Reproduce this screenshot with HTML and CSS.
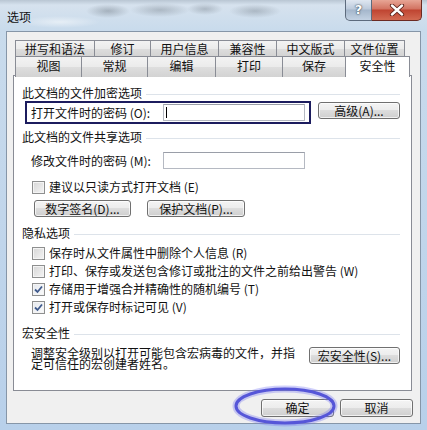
FILE: index.html
```html
<!DOCTYPE html>
<html lang="zh-CN">

<head>
    <meta charset="UTF-8">
    <title>选项</title>
    <link rel="stylesheet" href="styles.css">
</head>

<body>
    <div class="window">
        <div class="titlebar">
            <span class="title">选项</span>
            <div class="caption-btns">
                <span class="cap-help">?</span>
                <span class="cap-close">
                    <svg width="16" height="12" viewBox="0 0 16 12">
                        <path d="M3 1.5 L13 10.5 M13 1.5 L3 10.5" stroke="#5a2018" stroke-width="4.2" stroke-linecap="round"/>
                        <path d="M3 1.5 L13 10.5 M13 1.5 L3 10.5" stroke="#fff" stroke-width="2.4" stroke-linecap="round"/>
                    </svg>
                </span>
            </div>
        </div>

        <div class="client">
            <div class="tabs">
                <div class="tab-row row-back">
                    <div class="tab">拼写和语法</div>
                    <div class="tab">修订</div>
                    <div class="tab">用户信息</div>
                    <div class="tab">兼容性</div>
                    <div class="tab">中文版式</div>
                    <div class="tab">文件位置</div>
                </div>
                <div class="tab-row row-front">
                    <div class="tab">视图</div>
                    <div class="tab">常规</div>
                    <div class="tab">编辑</div>
                    <div class="tab">打印</div>
                    <div class="tab">保存</div>
                    <div class="tab selected">安全性</div>
                </div>
            </div>

            <div class="panel">
                <div class="group-title">此文档的文件加密选项</div>
                <div class="pw-row">
                    <div class="focus-box">
                        <span class="field-label">打开文件时的密码 (O):</span>
                        <span class="input"><span class="caret"></span></span>
                    </div>
                    <button class="btn adv">高级(A)...</button>
                </div>

                <div class="group-title gap-6">此文档的文件共享选项</div>
                <div class="field-row">
                    <span class="field-label">修改文件时的密码 (M):</span>
                    <span class="input"></span>
                </div>
                <div class="check-row readonly">
                    <span class="check"></span>建议以只读方式打开文档 (E)
                </div>
                <div class="btn-row">
                    <button class="btn sign">数字签名(D)...</button>
                    <button class="btn protect">保护文档(P)...</button>
                </div>

                <div class="group-title gap-9">隐私选项</div>
                <div class="check-list">
                    <div class="check-row"><span class="check"></span>保存时从文件属性中删除个人信息 (R)</div>
                    <div class="check-row"><span class="check"></span>打印、保存或发送包含修订或批注的文件之前给出警告 (W)</div>
                    <div class="check-row"><span class="check on"><svg width="11" height="11" viewBox="0 0 11 11"><path d="M2 5.5 L4.5 8 L9 2.5" fill="none" stroke="#3f5a8c" stroke-width="1.8"/></svg></span>存储用于增强合并精确性的随机编号 (T)</div>
                    <div class="check-row"><span class="check on"><svg width="11" height="11" viewBox="0 0 11 11"><path d="M2 5.5 L4.5 8 L9 2.5" fill="none" stroke="#3f5a8c" stroke-width="1.8"/></svg></span>打开或保存时标记可见 (V)</div>
                </div>

                <div class="group-title gap-12">宏安全性</div>
                <div class="macro-row">
                    <p class="macro-text">调整安全级别以打开可能包含宏病毒的文件，并指定可信任的宏创建者姓名。</p>
                    <button class="btn macro">宏安全性(S)...</button>
                </div>
            </div>

            <div class="footer">
                <button class="btn ok">确定</button>
                <button class="btn">取消</button>
            </div>
        </div>

        <!-- hand drawn mark round the OK button -->
        <svg class="mark" width="112" height="48" viewBox="0 0 112 48">
            <ellipse cx="55" cy="23" rx="49" ry="17" fill="none" stroke="rgba(120,120,240,0.35)" stroke-width="7"/>
            <ellipse cx="55" cy="23" rx="49" ry="17" fill="none" stroke="#5656d8" stroke-width="3"/>
        </svg>
    </div>
</body>

</html>
```

FILE: styles.css
```css
body {
    margin: 0;
    overflow: hidden;
    font-family: "Noto Sans CJK SC", "Noto Sans", sans-serif;
    font-size: 12px;
    color: #111;
}

.window {
    position: relative;
    width: 427px;
    height: 430px;
    background:
        radial-gradient(ellipse 22px 7px at 108px 11px, rgba(80, 90, 100, 0.35), transparent),
        radial-gradient(ellipse 30px 7px at 160px 10px, rgba(80, 90, 100, 0.3), transparent),
        radial-gradient(ellipse 18px 6px at 205px 9px, rgba(80, 90, 100, 0.3), transparent),
        radial-gradient(ellipse 26px 7px at 255px 11px, rgba(80, 90, 100, 0.3), transparent),
        radial-gradient(ellipse 40px 6px at 60px 22px, rgba(255, 255, 255, 0.5), transparent),
        linear-gradient(#b9c6d3 0px, #d6e2ee 5px, #c9dbec 30px, #b8d0ea 100%);
}

.titlebar {
    height: 31px;
    display: flex;
    justify-content: space-between;
    align-items: flex-start;
}

.title {
    padding: 10px 0 0 7px;
    line-height: 14px;
}

.caption-btns {
    display: flex;
    margin-right: 5px;
}

.cap-help {
    width: 27px;
    height: 21px;
    box-sizing: border-box;
    border: 1px solid #5d6b7d;
    border-top: none;
    border-radius: 0 0 0 5px;
    background: linear-gradient(#dfe7f1, #bccadb 45%, #a4b6cb 50%, #c3d2e3);
    color: #fff;
    font-family: "DejaVu Sans", sans-serif;
    font-weight: bold;
    font-size: 13px;
    line-height: 20px;
    text-align: center;
    text-shadow: 0 0 2px #33404f, 0 0 1px #33404f;
}

.cap-close {
    width: 50px;
    height: 21px;
    box-sizing: border-box;
    border: 1px solid #6b2a22;
    border-top: none;
    border-left: none;
    border-radius: 0 0 5px 0;
    background: linear-gradient(#e7a595, #d27361 45%, #bf4431 50%, #d26a52);
    display: flex;
    align-items: center;
    justify-content: center;
}

.client {
    position: relative;
    margin-left: 6px;
    width: 415px;
    height: 393px;
    box-sizing: border-box;
    border: 1px solid #8696a8;
    background: #f0f0f0;
}

.tabs {
    padding: 8px 0 0 8px;
}

.tab-row {
    display: grid;
}

.row-back {
    grid-template-columns: 79px 56px 68px 58px 68px 61px;
    height: 16px;
}

.row-front {
    grid-template-columns: 66px 66px 68px 67px 63px 65px;
    height: 19px;
}

.tab {
    border-top: 1px solid #898c95;
    border-left: 1px solid #898c95;
    background: linear-gradient(#f3f3f3, #ebebeb 50%, #dedede 50%, #d3d3d3);
    text-align: center;
    line-height: 15px;
}

.row-front .tab {
    line-height: 18px;
}

.tab:last-child {
    border-right: 1px solid #898c95;
}

.tab.selected {
    position: relative;
    z-index: 1;
    height: 20px;
    background: #fff;
}

.panel {
    margin-left: 6px;
    width: 399px;
    height: 316px;
    box-sizing: border-box;
    border: 1px solid #898c95;
    background: #fff;
    padding: 10px 11px 0 8px;
}

.group-title {
    display: flex;
    align-items: center;
    line-height: 14px;
}

.group-title::after {
    content: "";
    flex: 1;
    height: 1px;
    margin: 2px 0 0 4px;
    background: #dde3ea;
}

.gap-6 {
    margin-top: 6px;
}

.gap-9 {
    margin-top: 9px;
}

.gap-12 {
    margin-top: 12px;
}

.pw-row {
    display: flex;
    align-items: flex-start;
    margin: 1px 0 0 3px;
}

.focus-box {
    width: 286px;
    height: 23px;
    box-sizing: border-box;
    border: 2px solid #1c1c5e;
    padding: 0 4px;
    display: flex;
    align-items: center;
}

.field-label {
    width: 132px;
    flex-shrink: 0;
    line-height: 14px;
}

.input {
    display: block;
    width: 142px;
    height: 17px;
    box-sizing: border-box;
    border: 1px solid #b5b9c2;
    border-top-color: #9a9ea8;
    background: #fff;
    padding: 2px 0 0 2px;
}

.caret {
    display: block;
    width: 1px;
    height: 11px;
    background: #000;
}

.field-row {
    display: flex;
    align-items: center;
    margin-top: 8px;
    padding-left: 9px;
}

.btn {
    height: 17px;
    box-sizing: border-box;
    border: 1px solid #707070;
    border-radius: 3px;
    background: linear-gradient(#f4f4f4, #ececec 50%, #dddddd 50%, #cfcfcf);
    font: inherit;
    line-height: 14px;
    padding: 0;
    color: #111;
    box-shadow: inset 0 0 0 1px rgba(255, 255, 255, 0.7);
}

.adv {
    width: 82px;
    margin: 1px 0 0 7px;
}

.check-row {
    display: flex;
    align-items: center;
    line-height: 14px;
}

.readonly {
    margin-top: 11px;
    padding-left: 10px;
}

.check {
    width: 13px;
    height: 13px;
    box-sizing: border-box;
    border: 1px solid #8e8f8f;
    background: linear-gradient(135deg, #d6d6d6, #f4f4f4);
    box-shadow: inset 0 0 0 1px #f4f4f4;
    margin-right: 4px;
    display: flex;
    align-items: center;
    justify-content: center;
}

.check.on {
    background: linear-gradient(135deg, #e4e8ee, #fbfbfb);
}

.btn-row {
    display: flex;
    gap: 16px;
    margin-top: 6px;
    padding-left: 12px;
}

.sign {
    width: 97px;
}

.protect {
    width: 98px;
}

.check-list {
    display: flex;
    flex-direction: column;
    gap: 4px;
    margin-top: 6px;
    padding-left: 10px;
}

.macro-row {
    display: flex;
    align-items: flex-start;
    margin-top: 7px;
    padding-left: 9px;
}

.macro-text {
    width: 264px;
    margin: 0;
    line-height: 11px;
}

.macro {
    width: 91px;
    margin-left: 14px;
}

.footer {
    display: flex;
    justify-content: flex-end;
    gap: 6px;
    padding: 8px 7px 0 0;
}

.footer .btn {
    width: 73px;
    height: 18px;
}

.mark {
    position: absolute;
    left: 230px;
    top: 383px;
}
```
